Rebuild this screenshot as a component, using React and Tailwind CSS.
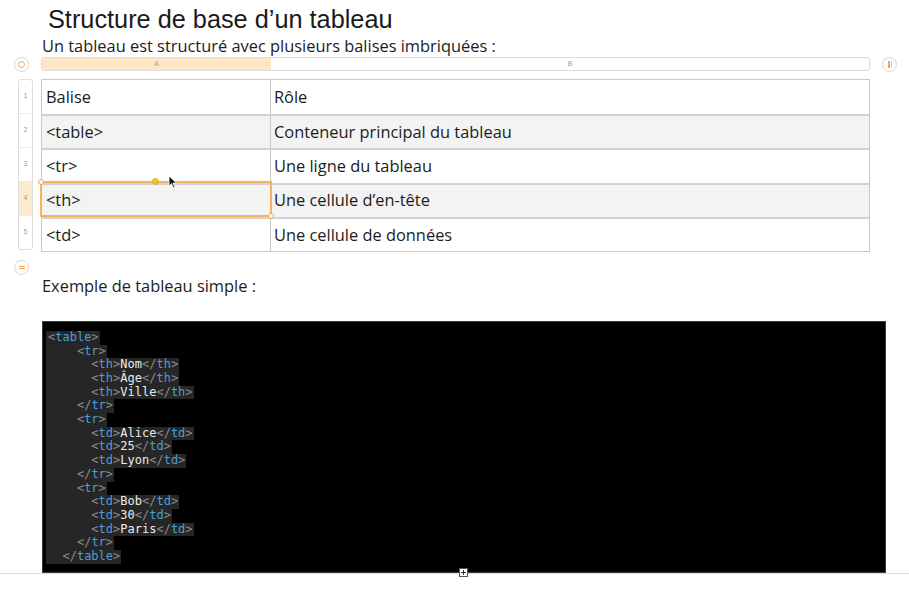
import React from 'react'

const rows = [
  ['Balise', 'Rôle'],
  ['<table>', 'Conteneur principal du tableau'],
  ['<tr>', 'Une ligne du tableau'],
  ['<th>', 'Une cellule d’en-tête'],
  ['<td>', 'Une cellule de données'],
]

const code = [
  [0, 'table', null],
  [4, 'tr', null],
  [6, 'th', 'Nom'],
  [6, 'th', 'Âge'],
  [6, 'th', 'Ville'],
  [4, '/tr', null],
  [4, 'tr', null],
  [6, 'td', 'Alice'],
  [6, 'td', '25'],
  [6, 'td', 'Lyon'],
  [4, '/tr', null],
  [4, 'tr', null],
  [6, 'td', 'Bob'],
  [6, 'td', '30'],
  [6, 'td', 'Paris'],
  [4, '/tr', null],
  [2, '/table', null],
]

const Tag = ({ name }) => (
  <>
    <span className="text-[#8a8a8a]">&lt;</span>
    {name.startsWith('/') && <span className="text-[#8a8a8a]">/</span>}
    <span className="text-[#4b9fd9]">{name.replace('/', '')}</span>
    <span className="text-[#8a8a8a]">&gt;</span>
  </>
)

const CodeLine = ({ indent, tag, text }) => (
  <div className="h-[13.7px]">
    <span className="inline-block bg-[#262626] pl-[2px] pr-[1px] whitespace-pre">
      {' '.repeat(indent)}
      <Tag name={tag} />
      {text && (
        <>
          <span className="text-[#ececec]">{text}</span>
          <Tag name={'/' + tag} />
        </>
      )}
    </span>
  </div>
)

export default function App() {
  return (
    <div className="w-[909px] h-[593px] bg-white overflow-hidden relative font-['Open_Sans',sans-serif] text-[#1c1c1c]">
      <h1 className="pl-[48px] pt-[4px] h-[37px] text-[25.3px] leading-[30px] font-['Liberation_Sans',sans-serif] text-[#1a1a1a]">
        Structure de base d’un tableau
      </h1>
      <p className="pl-[42px] -mt-[1px] text-[16.4px] leading-[20px]">
        Un tableau est structuré avec plusieurs balises imbriquées :
      </p>

      {/* column header bar */}
      <div className="flex items-center h-[14px] mt-[1px]">
        <div className="w-[41px] flex justify-center pl-[2px]">
          <div className="w-[15px] h-[15px] rounded-full border border-[#d6d6d6] bg-white flex items-center justify-center">
            <div className="w-[7px] h-[7px] rounded-full border border-[#f3a64a]" />
          </div>
        </div>
        <div className="w-[829px] h-[14px] flex rounded-[3px] border border-[#dcdcdc] overflow-hidden text-[7px] leading-[12px] text-[#999] font-['Liberation_Sans',sans-serif]">
          <div className="w-[229px] bg-[#fde6c6] text-center">A</div>
          <div className="flex-1 text-center">B</div>
        </div>
        <div className="w-[39px] flex justify-center">
          <div className="w-[15px] h-[15px] rounded-full border border-[#d6d6d6] bg-white flex items-center justify-center gap-[1px]">
            <div className="w-[2px] h-[7px] bg-[#f3a64a]" />
            <div className="w-[1px] h-[7px] bg-[#f5d24a]" />
          </div>
        </div>
      </div>

      {/* table */}
      <div className="flex mt-[8px]">
        <div className="w-[41px] flex justify-end pr-[8px]">
          <div className="w-[15px] h-[171px] rounded-[3px] border border-[#dcdcdc] flex flex-col overflow-hidden text-[7px] text-[#9a9a9a] font-['Liberation_Sans',sans-serif]">
            {rows.map((_, i) => (
              <div key={i} className={`flex-1 flex items-center justify-center ${i === 3 ? 'bg-[#fdebd0]' : ''} ${i > 0 ? 'border-t border-[#ececec]' : ''}`}>
                {i + 1}
              </div>
            ))}
          </div>
        </div>
        <div className="w-[829px] border border-[#c9c9c9] relative">
          {rows.map(([a, b], i) => (
            <div
              key={i}
              className={`flex h-[34.2px] text-[16.4px] ${i % 2 === 1 ? 'bg-[#f3f3f3]' : 'bg-white'} ${i > 0 ? 'border-t-2 border-[#d2d2d2]' : ''}`}
            >
              <div className="w-[229px] flex items-center pl-[4px] border-r border-[#c9c9c9]">{a}</div>
              <div className="flex-1 flex items-center pl-[3px]">{b}</div>
            </div>
          ))}
          {/* selection on A4 */}
          <div className="absolute left-[-2px] top-[101px] w-[232px] h-[36px] border-2 border-[#f6b35b] pointer-events-none">
            <div className="absolute -left-[4px] -top-[4px] w-[6px] h-[6px] rounded-full bg-white border border-[#f3a64a]" />
            <div className="absolute left-[110px] -top-[5px] w-[7px] h-[7px] rounded-full bg-[#f2c230] border border-[#e2a820]" />
            <div className="absolute -right-[4px] -bottom-[4px] w-[6px] h-[6px] rounded-full bg-white border border-[#f3a64a]" />
          </div>
          {/* cursor */}
          <svg className="absolute left-[126px] top-[95px]" width="10" height="14" viewBox="0 0 10 14">
            <path d="M1 1 L1 11 L3.5 8.5 L5.5 13 L7 12.3 L5 8 L8.5 8 Z" fill="#111" stroke="#fff" strokeWidth="0.8" />
          </svg>
        </div>
      </div>

      {/* add row control */}
      <div className="flex mt-[8px]">
        <div className="w-[41px] flex justify-center pl-[2px]">
          <div className="w-[15px] h-[15px] rounded-full border border-[#d6d6d6] bg-white flex flex-col items-center justify-center gap-[1px]">
            <div className="w-[6px] h-[1px] bg-[#f3a64a]" />
            <div className="w-[6px] h-[1px] bg-[#f3a64a]" />
          </div>
        </div>
      </div>

      <p className="pl-[42px] mt-[1px] text-[16.4px] leading-[20px]">Exemple de tableau simple :</p>

      {/* code block */}
      <div className="ml-[42px] mt-[25px] w-[844px] h-[252px] bg-black border border-[#3a3a3a] pt-[9px] pl-[3px] font-['DejaVu_Sans_Mono',monospace] text-[12px] leading-[13.7px] relative">
        {code.map(([indent, tag, text], i) => (
          <CodeLine key={i} indent={indent} tag={tag} text={text} />
        ))}
      </div>
      <div className="h-[1px] bg-[#dedede]" />
      <div className="absolute left-[459px] top-[568px] w-[9px] h-[9px] bg-white border border-[#555] flex items-center justify-center">
        <div className="relative w-[5px] h-[5px]">
          <div className="absolute left-[2px] top-0 w-[1px] h-[5px] bg-[#333]" />
          <div className="absolute top-[2px] left-0 h-[1px] w-[5px] bg-[#333]" />
        </div>
      </div>
    </div>
  )
}
